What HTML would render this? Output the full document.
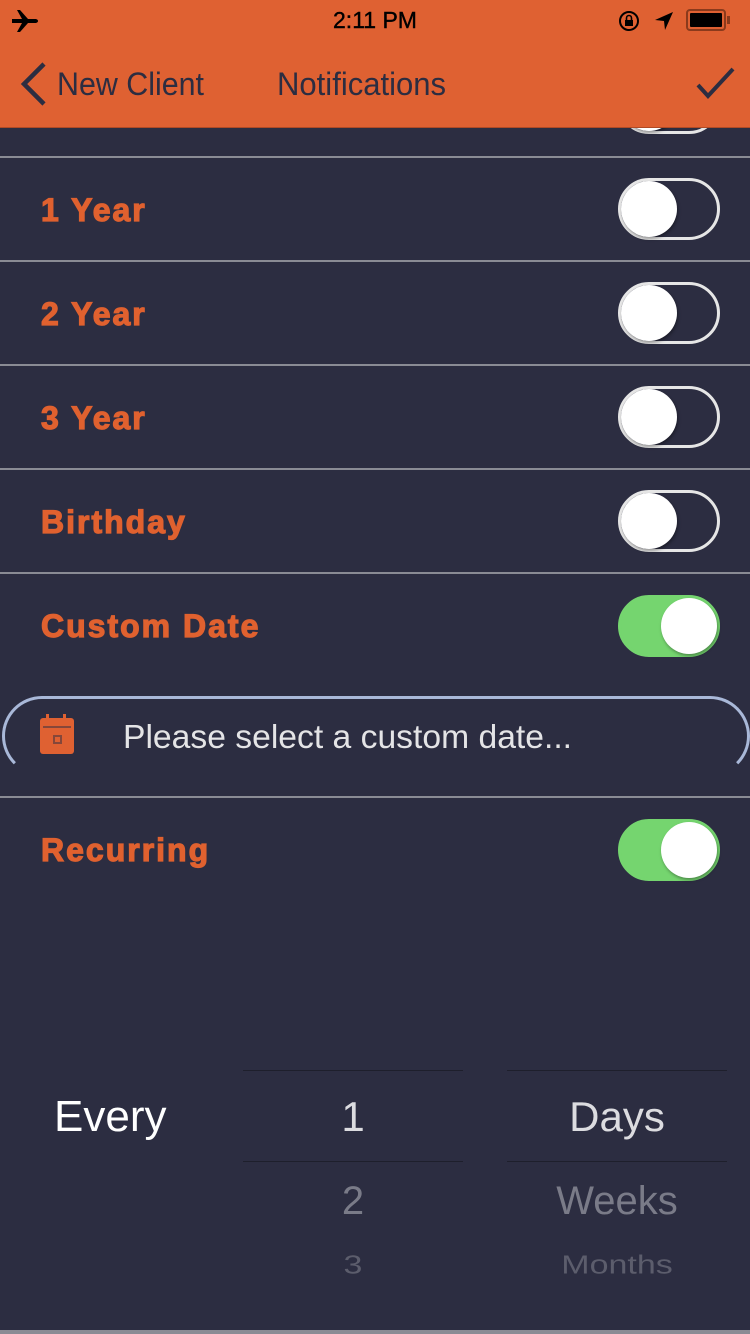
<!DOCTYPE html>
<html><head><meta charset="utf-8"><style>
*{margin:0;padding:0;box-sizing:border-box}
body{width:750px;height:1334px;background:#2c2d41;position:relative;overflow:hidden;font-family:"Liberation Sans",sans-serif}
.abs{position:absolute}
.nav{left:0;top:0;width:750px;height:128px;background:#df6132;border-bottom:1px solid #b04a25;z-index:1}
.top{z-index:2}
.line{left:0;width:750px;height:2px;background:#8a8b94}
.lbl{left:41px;color:#e0612f;font-weight:bold;font-size:32px;letter-spacing:2px;line-height:40px;-webkit-text-stroke:1.2px #e0612f}
.tg{left:618px;width:102px;height:62px;border-radius:31px;border:3px solid #e6e6e6;background:#2c2d41}
.tg .k{position:absolute;left:0;top:0;width:56px;height:56px;border-radius:50%;background:#fff;box-shadow:1px 2px 3px rgba(0,0,0,.35)}
.tg.on{background:#75d56f;border-color:#75d56f}
.tg.on .k{left:40px}
.pk{font-size:42px;text-align:center;line-height:50px}
.pl{height:1px;background:#1e1f2c}
</style></head><body>
<div class="abs nav"></div>
<svg class="abs top" style="left:11px;top:9px" width="28" height="24" viewBox="0 0 28 24"><path d="M1 10h10L6 1h3l8 9h7c2 0 3 1 3 2s-1 2-3 2h-7l-8 9H6l5-9H1z" fill="#000"/></svg>
<div class="abs top" style="left:0;width:750px;top:7px;text-align:center;font-size:23px;color:#000;-webkit-text-stroke:0.4px #000">2:11 PM</div>
<svg class="abs top" style="left:617px;top:9px" width="24" height="24" viewBox="0 0 24 24"><circle cx="12" cy="12" r="9" fill="none" stroke="#000" stroke-width="2"/><rect x="8" y="11" width="8" height="6" fill="#000"/><path d="M9.5 11V9a2.5 2.5 0 015 0v2" fill="none" stroke="#000" stroke-width="1.6"/></svg>
<svg class="abs top" style="left:653px;top:10px" width="22" height="22" viewBox="0 0 22 22"><path d="M20 2L2 10l9 1 1 9z" fill="#000"/></svg>
<div class="abs top" style="left:686px;top:9px;width:40px;height:22px;border:2px solid #8a3a1c;border-radius:4px;padding:2px"><div style="width:100%;height:100%;background:#000;border-radius:1px"></div></div>
<div class="abs top" style="left:727px;top:16px;width:3px;height:8px;background:#8a3a1c"></div>
<svg class="abs top" style="left:18px;top:62px" width="30" height="44" viewBox="0 0 30 44"><path d="M26 2L6 22l20 20" fill="none" stroke="#2c2d41" stroke-width="4.5"/></svg>
<div class="abs top" style="left:57px;top:66px;font-size:32px;color:#2c2d41;transform:scaleX(.95);transform-origin:left">New Client</div>
<div class="abs top" style="left:277px;top:66px;font-size:32px;color:#2c2d41;transform:scaleX(.97);transform-origin:left">Notifications</div>
<svg class="abs top" style="left:695px;top:66px" width="42" height="34" viewBox="0 0 42 34"><path d="M3 19l10 11L38 3" fill="none" stroke="#2c2d41" stroke-width="4"/></svg>

<div class="abs tg" style="top:72px"><div class="k"></div></div>
<div class="abs line" style="top:156px"></div>
<div class="abs lbl" style="top:190px">1 Year</div>
<div class="abs tg" style="top:178px"><div class="k"></div></div>
<div class="abs line" style="top:260px"></div>
<div class="abs lbl" style="top:294px">2 Year</div>
<div class="abs tg" style="top:282px"><div class="k"></div></div>
<div class="abs line" style="top:364px"></div>
<div class="abs lbl" style="top:398px">3 Year</div>
<div class="abs tg" style="top:386px"><div class="k"></div></div>
<div class="abs line" style="top:468px"></div>
<div class="abs lbl" style="top:502px">Birthday</div>
<div class="abs tg" style="top:490px"><div class="k"></div></div>
<div class="abs line" style="top:572px"></div>
<div class="abs lbl" style="top:606px">Custom Date</div>
<div class="abs tg on" style="top:595px"><div class="k"></div></div>

<div class="abs" style="left:2px;top:696px;width:748px;height:80px;border:3px solid #a9b8d8;border-bottom-color:transparent;border-radius:42px"></div>
<svg class="abs" style="left:38px;top:713px" width="40" height="44" viewBox="0 0 40 44"><rect x="8" y="1" width="3" height="8" fill="#df6132"/><rect x="25" y="1" width="3" height="8" fill="#df6132"/><rect x="2" y="5" width="34" height="36" rx="3" fill="#df6132"/><rect x="5" y="13" width="28" height="2" fill="#2c2d41" opacity=".5"/><rect x="15" y="22" width="9" height="9" fill="#2c2d41" opacity=".5"/><rect x="17" y="24" width="5" height="5" fill="#df6132"/></svg>
<div class="abs" style="left:123px;top:718px;font-size:33px;color:#e4e4e6;transform:scaleX(1.02);transform-origin:left">Please select a custom date...</div>
<div class="abs line" style="top:796px"></div>
<div class="abs lbl" style="top:830px">Recurring</div>
<div class="abs tg on" style="top:819px"><div class="k"></div></div>

<div class="abs" style="left:54px;top:1092px;font-size:44px;color:#fff">Every</div>
<div class="abs pl" style="left:243px;top:1070px;width:220px"></div>
<div class="abs pl" style="left:243px;top:1161px;width:220px"></div>
<div class="abs pl" style="left:507px;top:1070px;width:220px"></div>
<div class="abs pl" style="left:507px;top:1161px;width:220px"></div>
<div class="abs pk" style="left:243px;width:220px;top:1092px;color:#dcdce0">1</div>
<div class="abs pk" style="left:507px;width:220px;top:1092px;color:#dcdce0">Days</div>
<div class="abs pk" style="left:243px;width:220px;top:1176px;color:#7a7b88;font-size:40px">2</div>
<div class="abs pk" style="left:507px;width:220px;top:1176px;color:#7a7b88;font-size:40px">Weeks</div>
<div class="abs pk" style="left:243px;width:220px;top:1240px;color:#5c5d6c;font-size:34px;transform:scaleY(.75)">3</div>
<div class="abs pk" style="left:507px;width:220px;top:1240px;color:#5c5d6c;font-size:34px;transform:scaleY(.75)">Months</div>
<div class="abs" style="left:0;top:1330px;width:750px;height:4px;background:#8a8b94"></div>
</body></html>
